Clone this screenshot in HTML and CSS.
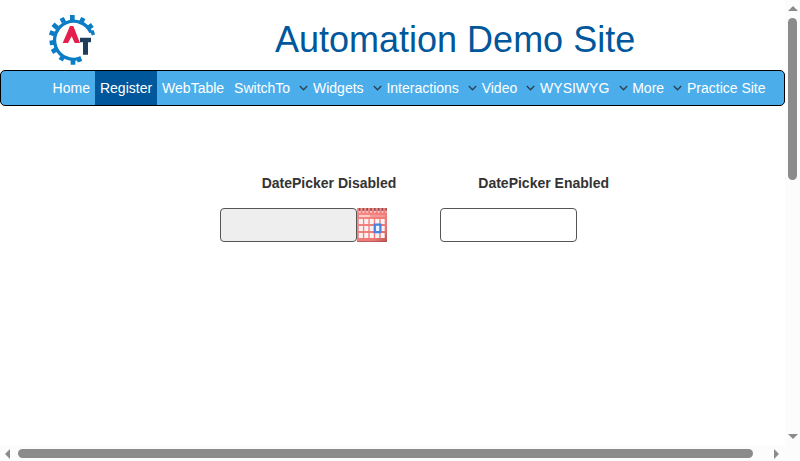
FILE: index.html
```
<!DOCTYPE html>
<html lang="en">
<head>
<meta charset="utf-8">
<title>Datepicker</title>
<link rel="stylesheet" href="styles.css">
</head>
<body>
<div class="window">
  <div class="page">
    <header class="header">
      <svg class="logo" viewBox="0 0 192 186">
        <g fill="none" stroke="#0b7dc6">
          <path d="M153 74A57 57 0 1 0 121 150" stroke-width="10"/>
          <path stroke-width="14" d="M97 38V21M123 44l7-14M143 61l14-10M153 76l10-3M72 43l-7-13M52 60L39 49M43 78l-14-5M42 103l-13 2M49 124l-13 8M70 144l-8 13M99 152v18M115 147l5 14"/>
        </g>
        <path fill="#e3204c" d="M90 54h10l20 51h-16L95 85l-11 20H68z"/>
        <path fill="#203d5a" d="M120 89h33v14h-9v37h-15v-37h-9z"/>
      </svg>
      <h1 class="title">Automation Demo Site</h1>
    </header>
    <nav class="nav">
      <a class="item">Home</a>
      <a class="item active">Register</a>
      <a class="item">WebTable</a>
      <a class="item">SwitchTo<svg class="chevron" viewBox="0 0 9 6"><path d="M.8 1l3.7 3.7L8.2 1"/></svg></a>
      <a class="item">Widgets<svg class="chevron" viewBox="0 0 9 6"><path d="M.8 1l3.7 3.7L8.2 1"/></svg></a>
      <a class="item">Interactions<svg class="chevron" viewBox="0 0 9 6"><path d="M.8 1l3.7 3.7L8.2 1"/></svg></a>
      <a class="item">Video<svg class="chevron" viewBox="0 0 9 6"><path d="M.8 1l3.7 3.7L8.2 1"/></svg></a>
      <a class="item">WYSIWYG<svg class="chevron" viewBox="0 0 9 6"><path d="M.8 1l3.7 3.7L8.2 1"/></svg></a>
      <a class="item">More<svg class="chevron" viewBox="0 0 9 6"><path d="M.8 1l3.7 3.7L8.2 1"/></svg></a>
      <a class="item">Practice Site</a>
    </nav>
    <main class="pickers">
      <div class="picker">
        <label class="label first" for="d1">DatePicker Disabled</label>
        <div class="control">
          <input class="field readonly" id="d1" readonly>
          <svg class="calendar" viewBox="0 0 30 34">
            <defs><linearGradient id="red" x1="0" y1="0" x2="1" y2="1"><stop offset="0" stop-color="#f98a86"/><stop offset=".75" stop-color="#ea7875"/><stop offset="1" stop-color="#b85451"/></linearGradient></defs>
            <path fill="url(#red)" d="M0 0h30v34H0z"/>
            <path d="M1.8 3.5h28" stroke="#fff" stroke-width="2.6" stroke-dasharray="1.7 2.1" opacity=".6"/>
            <path d="M1.8 1.5h28" stroke="#754447" stroke-width="3" stroke-dasharray="1.6 2.2" opacity=".8"/>
            <path d="M2 8h11" stroke="#fff" stroke-width="2" opacity=".6"/>
            <path d="M13 8h15" stroke="#fff" stroke-width="2" opacity=".2"/>
            <path d="M1.8 13.5h26.2M1.8 20.5h26.2M1.8 27.5h26.2" stroke="#fff" stroke-width="4.8" stroke-dasharray="4.1 1.35" opacity=".9"/>
            <path d="M17.8 16.7h5.6v7.4h-5.6z" fill="#edf4ff" stroke="#4a80df" stroke-width="2.2"/>
            <path d="M0 33.5h30" stroke="#ac5552" opacity=".7"/>
          </svg>
        </div>
      </div>
      <div class="picker">
        <label class="label second" for="d2">DatePicker Enabled</label>
        <div class="control"><input class="field" id="d2"></div>
      </div>
    </main>
  </div>
  <div class="bar vertical">
    <svg class="arrow" viewBox="0 0 15 18"><path d="M3 11l5-5 5 5z"/></svg>
    <div class="thumb"></div>
    <svg class="arrow end" viewBox="0 0 15 18"><path d="M3 6l5 5 5-5z"/></svg>
  </div>
  <div class="bar horizontal">
    <svg class="arrow" viewBox="0 0 18 15"><path d="M10 3L5 8l5 5z"/></svg>
    <div class="thumb"></div>
    <svg class="arrow end" viewBox="0 0 18 15"><path d="M7 3l5 5-5 5z"/></svg>
  </div>
</div>
</body>
</html>
```
FILE: styles.css
```
* { box-sizing: border-box; }
body {
  margin: 0;
  overflow: hidden;
  font: 14px/20px "Liberation Sans", sans-serif;
  color: #333;
  background: #fff;
}
.window {
  display: grid;
  grid-template: 446px 15px / 785px 15px;
  background: #fcfcfc;
}
.page { background: #fff; overflow: hidden; }
.header {
  display: flex;
  height: 70px;
  padding: 8px 0 0 40px;
}
.logo { width: 64px; height: 62px; }
.title {
  margin: 12px 0 0 171px;
  font-size: 36px;
  line-height: 40px;
  font-weight: 400;
  color: #00579b;
  white-space: nowrap;
}
.nav {
  display: flex;
  height: 36px;
  padding-left: 46.6px;
  border: 1px solid #000;
  border-radius: 5px;
  background: #4baeeb;
}
.item {
  display: flex;
  align-items: center;
  padding: 0 5px;
  color: #fff;
  white-space: nowrap;
}
.active { background: #00579b; }
.chevron {
  width: 9px;
  height: 6px;
  margin: 0 -.4px 0 9.25px;
  fill: none;
  stroke: #2a4353;
  stroke-width: 1.4;
}
.item:has(.chevron) { padding-right: 0; }
.pickers {
  display: flex;
  padding: 67px 0 0 220px;
}
.picker { width: 220px; }
.label { display: block; font-weight: 700; }
.first { margin-left: 41.7px; }
.second { margin-left: 38.3px; }
.control { display: flex; margin-top: 15px; }
.field {
  width: 137px;
  height: 34px;
  border: 1px solid #555;
  border-radius: 4px;
  background: #fff;
  outline: none;
}
.readonly { background: #eee; }
.calendar { width: 30px; height: 34px; }
.bar { display: flex; }
.vertical { flex-direction: column; }
.thumb { background: #8b8b8b; border-radius: 5px; }
.arrow { flex: none; fill: #8b8b8b; }
.vertical .arrow { width: 15px; height: 18px; }
.horizontal .arrow { width: 18px; height: 15px; }
.vertical .thumb { width: 9px; height: 162px; margin-left: 3px; }
.horizontal .thumb { width: 735px; height: 9px; margin-top: 3px; }
.vertical .end { margin-top: auto; }
.horizontal .end { margin-left: 14px; }
```
